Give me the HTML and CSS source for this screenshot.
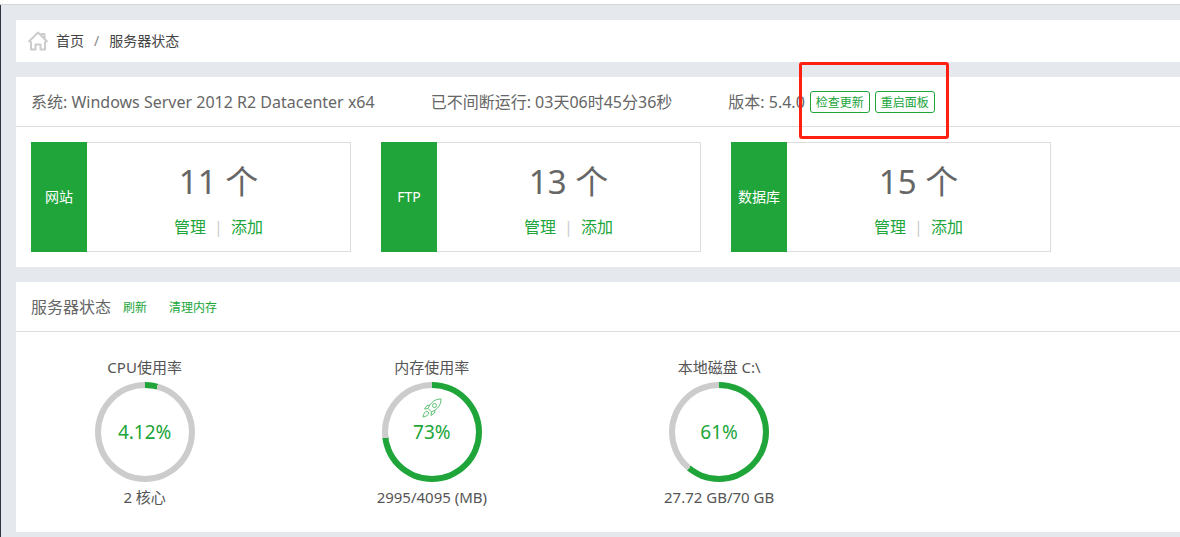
FILE: index.html
```html
<!DOCTYPE html>
<html lang="zh-CN">

<head>
    <meta charset="UTF-8">
    <meta name="viewport" content="width=device-width, initial-scale=1.0">
    <title>服务器状态</title>
    <link rel="stylesheet" href="styles.css">
</head>

<body>
    <div class="topbar"></div>
    <main class="main-content">
        <nav class="panel crumbs">
            <svg class="home-icon" viewBox="0 0 22 22" width="22" height="22">
                <path d="M1.500 13 L11 3.500 L20.500 13 M14.500 6 V5 H17.500 V9.500 M4 12.500 V20.500 H8.500 V15.500 H13.500 V20.500 H18 V12.500" />
            </svg>
            <a href="#">首页</a>
            <span class="slash">/</span>
            <a href="#">服务器状态</a>
        </nav>

        <section class="panel">
            <div class="panel-title info">
                <span class="info-item">系统: Windows Server 2012 R2 Datacenter x64</span>
                <span class="info-item">已不间断运行: 03天06时45分36秒</span>
                <span class="info-version">版本: 5.4.0</span>
                <div class="actions">
                    <button type="button" class="btn">检查更新</button>
                    <button type="button" class="btn">重启面板</button>
                </div>
            </div>
            <div class="cards">
                <div class="card">
                    <div class="card-name">网站</div>
                    <div class="card-body">
                        <div class="card-count">11 个</div>
                        <div class="card-links"><a href="#">管理</a><span>|</span><a href="#">添加</a></div>
                    </div>
                </div>
                <div class="card">
                    <div class="card-name">FTP</div>
                    <div class="card-body">
                        <div class="card-count">13 个</div>
                        <div class="card-links"><a href="#">管理</a><span>|</span><a href="#">添加</a></div>
                    </div>
                </div>
                <div class="card">
                    <div class="card-name">数据库</div>
                    <div class="card-body">
                        <div class="card-count">15 个</div>
                        <div class="card-links"><a href="#">管理</a><span>|</span><a href="#">添加</a></div>
                    </div>
                </div>
            </div>
        </section>

        <section class="panel">
            <div class="panel-title status">
                <span>服务器状态</span>
                <a href="#">刷新</a>
                <a href="#">清理内存</a>
            </div>
            <ul class="gauges">
                <li>
                    <div class="gauge-label">CPU使用率</div>
                    <div class="ring" style="--value: 4.12%">
                        <div class="ring-inner">4.12%</div>
                    </div>
                    <div class="gauge-label">2 核心</div>
                </li>
                <li>
                    <div class="gauge-label">内存使用率</div>
                    <div class="ring" style="--value: 73%">
                        <div class="ring-inner">
                            <svg class="rocket" viewBox="0 0 20 20" width="20" height="20">
                                <path d="M19 1 C13 1 9 4 6 10.500 L9.500 14 C16 11 19 7 19 1 Z" />
                                <circle cx="12.500" cy="7.500" r="2" />
                                <path d="M8 7 L5 7.500 L2.500 11 L6 10.500 M13 12 L12.500 15 L9 17.500 L9.500 14" />
                                <path d="M5 13 C3 13.500 1.500 15.500 1 19 C4.500 18.500 6.500 17 7 15 Z" />
                            </svg>
                            73%
                        </div>
                    </div>
                    <div class="gauge-label">2995/4095 (MB)</div>
                </li>
                <li>
                    <div class="gauge-label">本地磁盘 C:\</div>
                    <div class="ring" style="--value: 61%">
                        <div class="ring-inner">61%</div>
                    </div>
                    <div class="gauge-label">27.72 GB/70 GB</div>
                </li>
            </ul>
        </section>
    </main>
</body>

</html>
```

FILE: styles.css
```css
* {
    box-sizing: border-box;
}

body {
    margin: 0;
    font-family: "Noto Sans", "Noto Sans CJK SC", sans-serif;
    font-size: 14px;
    color: #666;
    background: #e5e8ed;
}

a {
    color: #20a53a;
    text-decoration: none;
}

.topbar {
    height: 5px;
    background: #fff;
    border-bottom: 1px solid #d5d5d8;
}

.main-content {
    display: flex;
    flex-direction: column;
    gap: 15px;
    min-height: calc(100vh - 5px);
    padding: 15px 0 5px 15px;
    border-left: 1px solid #2f3440;
}

.panel {
    background: #fff;
}

/* breadcrumb */
.crumbs {
    display: flex;
    align-items: center;
    height: 42px;
    padding: 0 0 2px 11px;
    font-size: 14px;
}

.crumbs a {
    color: #444;
}

.home-icon {
    margin-right: 7px;
    fill: none;
    stroke: #ccc;
    stroke-width: 2;
    stroke-linejoin: round;
}

.slash {
    margin: 0 10px;
    color: #888;
}

.panel-title {
    display: flex;
    align-items: center;
    height: 50px;
    padding-left: 15px;
    border-bottom: 1px solid #ddd;
    font-size: 16px;
    line-height: 22px;
    white-space: nowrap;
}

.info-item {
    margin-right: 56px;
}

.info-version {
    margin-right: 5px;
}

.actions {
    position: relative;
    display: flex;
    gap: 5px;
}

/* red frame around the two buttons */
.actions::after {
    content: "";
    position: absolute;
    inset: -29px -14px -26px -11px;
    border: 3px solid #ff2012;
    border-radius: 3px;
    pointer-events: none;
}

.btn {
    height: 22px;
    padding: 2px 5px 0;
    font-family: inherit;
    font-size: 12px;
    line-height: 18px;
    color: #20a53a;
    background: #fff;
    border: 1px solid #20a53a;
    border-radius: 3px;
    cursor: pointer;
}

/* counters */
.cards {
    display: flex;
    gap: 30px;
    padding: 15px;
}

.card {
    display: flex;
    width: 320px;
    height: 110px;
}

.card-name {
    display: flex;
    align-items: center;
    justify-content: center;
    width: 56px;
    padding-bottom: 2px;
    color: #fff;
    background: #20a53a;
}

.card-body {
    flex: 1;
    padding-top: 15px;
    border: 1px solid #ddd;
    border-left: 0;
    text-align: center;
}

.card-count {
    font-size: 33px;
    line-height: 48px;
}

.card-links {
    margin-top: 9px;
    font-size: 16px;
    line-height: 24px;
}

.card-links span {
    margin: 0 8px;
    color: #ccc;
}

/* server status */
.status a {
    margin-left: 12px;
    padding-top: 2px;
    font-size: 12px;
}

.status a + a {
    margin-left: 22px;
}

.gauges {
    display: grid;
    grid-template-columns: repeat(4, 1fr);
    margin: 0 30px 0 -15px;
    padding: 24px 0;
    list-style: none;
    font-size: 15px;
    color: #555;
    text-align: center;
}

.gauge-label {
    line-height: 22px;
}

.ring {
    display: flex;
    width: 100px;
    height: 100px;
    margin: 4px auto;
    padding: 6px;
    border-radius: 50%;
    background: conic-gradient(#20a53a var(--value), #ccc 0);
}

.ring-inner {
    position: relative;
    flex: 1;
    border-radius: 50%;
    font-size: 19px;
    line-height: 88px;
    color: #20a53a;
    background: #fff;
}

.rocket {
    position: absolute;
    top: 10px;
    left: 34px;
    fill: none;
    stroke: #5fc073;
    stroke-width: 1;
}
```
